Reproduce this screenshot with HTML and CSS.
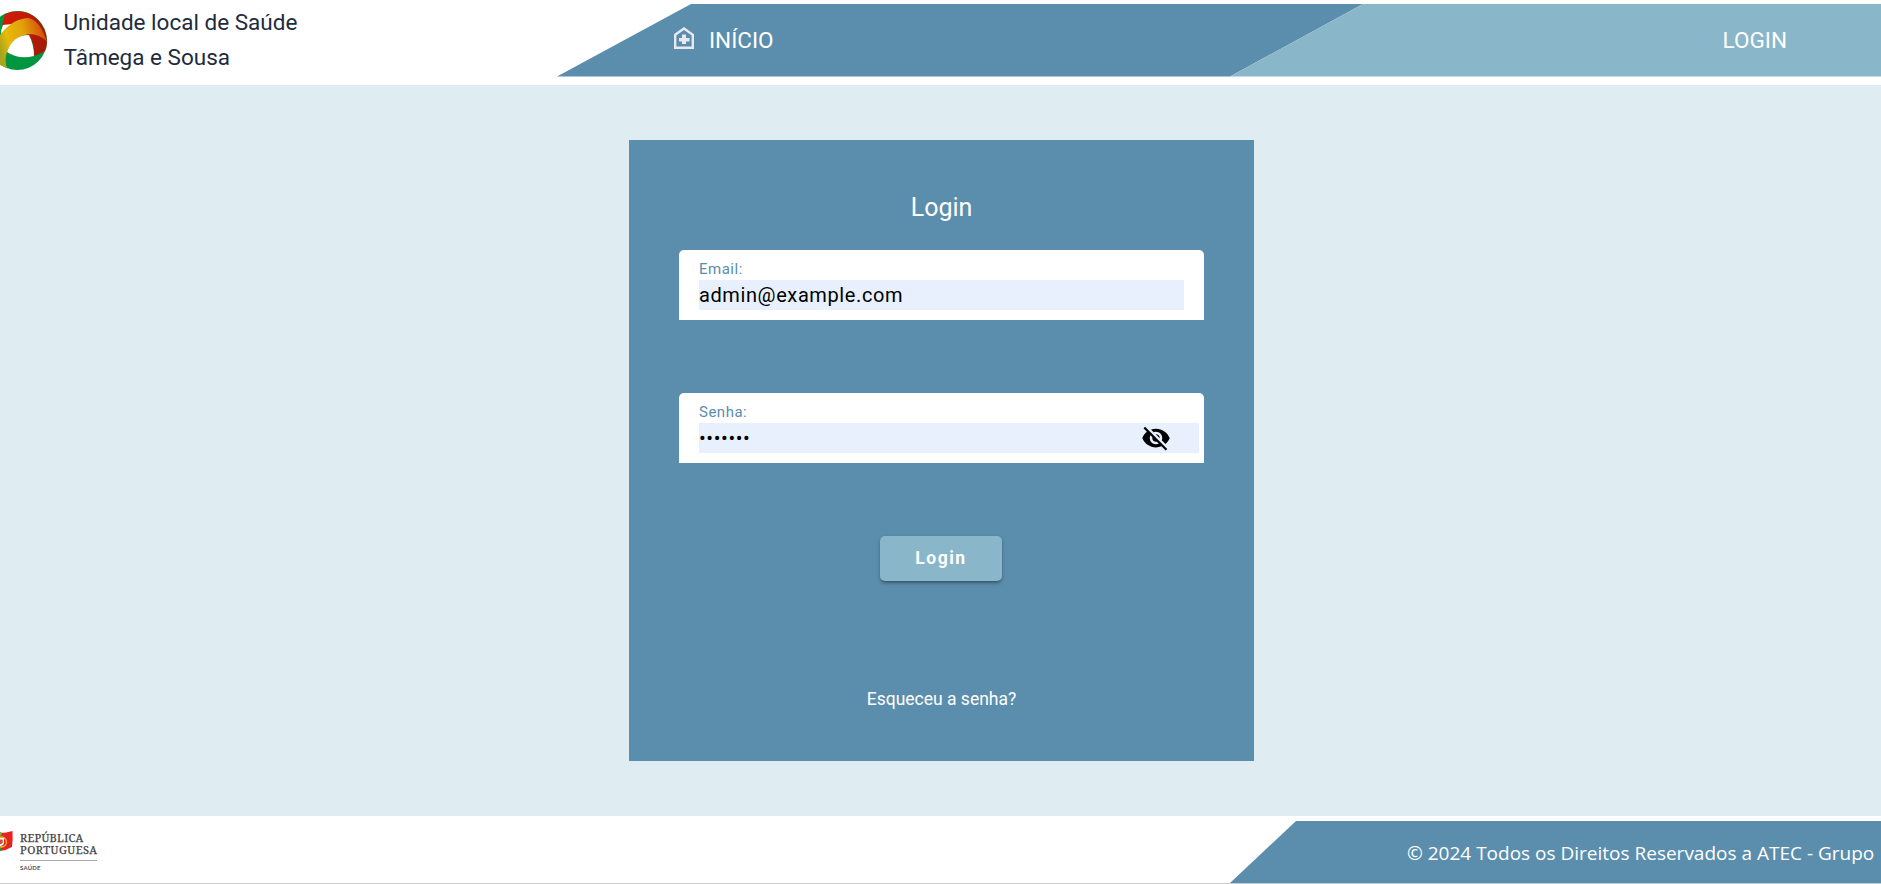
FILE: index.html
```html
<!DOCTYPE html>
<html lang="pt">
<head>
<meta charset="utf-8">
<title>Login</title>
<link rel="stylesheet" href="styles.css">
</head>
<body>
<header class="header">
  <div class="brand">
    <svg class="brand-logo" width="47" height="60" viewBox="0 0 47 60">
      <defs>
        <linearGradient id="gold" x1="0" y1="0.6" x2="1" y2="0.3"><stop offset="0" stop-color="#a9a51c"/><stop offset=".2" stop-color="#e8b90a"/><stop offset=".55" stop-color="#e2a20a"/><stop offset="1" stop-color="#d3420c"/></linearGradient>
        <linearGradient id="red" x1="0" y1="0" x2="1" y2="0.3"><stop offset="0" stop-color="#d81a05"/><stop offset="1" stop-color="#a81a08"/></linearGradient>
      </defs>
      <circle cx="17.500" cy="29.500" r="29.500" fill="#009640"/>
      <path d="M5 3Q16-2 28 2Q45 10 47 30Q47 36 45 40Q38 44 34 45Q35 32 28 24L2 14Z" fill="url(#red)"/>
      <path d="M1 24Q1 18 3 14L12 13L8 19Z" fill="#fff"/>
      <path d="M0 24Q12 8 28 7Q40 9 47 31Q40 23 29 23Q12 26 7 41Q4 49 7 57L0 54Z" fill="url(#gold)"/>
      <path d="M7 41Q13 24 29 24Q34 34 34 45Q19 49 7 41Z" fill="#fff"/>
    </svg>
    <div class="brand-name">Unidade local de Saúde<br>Tâmega e Sousa</div>
  </div>
  <nav class="nav">
    <a class="nav-home">
      <svg class="home-icon" width="20" height="23" viewBox="0 0 20 23"><path d="M1.200 7.800L10 1.500l8.800 6.300v12.900H1.200z" fill="none" stroke="#e8e8ee" stroke-width="2.400"/><path d="M8 7.500h4V11h3.500v3.500H12V17H8v-2.500H5V11h3z" fill="#e8e8ee"/></svg>
      <span>INÍCIO</span>
    </a>
    <a class="nav-login"><span>LOGIN</span></a>
  </nav>
</header>
<main class="main">
  <form class="card">
    <h1 class="title">Login</h1>
    <div class="field">
      <label class="label">Email:</label>
      <div class="input"><span>admin@example.com</span></div>
    </div>
    <div class="field field-password">
      <label class="label">Senha:</label>
      <div class="input"><span class="dots">•••••••</span>
        <svg class="eye" width="30" height="30" viewBox="0 0 24 24"><path d="M12 7c2.760 0 5 2.240 5 5 0 .65-.13 1.260-.36 1.830l2.920 2.920c1.510-1.260 2.700-2.890 3.430-4.750-1.730-4.390-6-7.500-11-7.500-1.400 0-2.740.25-3.980.7l2.160 2.160C10.740 7.130 11.350 7 12 7zM2 4.270l2.280 2.280.46.46C3.080 8.300 1.780 10.020 1 12c1.730 4.390 6 7.500 11 7.500 1.550 0 3.030-.3 4.380-.84l.42.42L19.730 22 21 20.730 3.270 3 2 4.270zM7.530 9.800l1.550 1.550c-.05.21-.08.43-.08.65 0 1.660 1.340 3 3 3 .22 0 .44-.03.65-.08l1.550 1.550c-.67.33-1.410.53-2.200.53-2.760 0-5-2.240-5-5 0-.79.2-1.530.53-2.200zm4.310-.78l3.150 3.150.02-.16c0-1.660-1.340-3-3-3l-.17.010z"/></svg>
      </div>
    </div>
    <button class="submit" type="button">Login</button>
    <a class="forgot">Esqueceu a senha?</a>
  </form>
</main>
<footer class="footer">
  <div class="gov">
    <svg class="gov-flag" width="13" height="22" viewBox="0 0 13 22"><path d="M0 2Q6 2 12.500 0Q13 9 12 16Q7 19 0 20z" fill="#e52421"/><path d="M0 1L1.500 1V4L0 5z" fill="#6dbb45"/><path d="M0 16h1.500v3.500L0 20z" fill="#22973f"/><circle cx="1.500" cy="11" r="5" fill="none" stroke="#e9b72b" stroke-width="1.300"/><path d="M0 7h4v5q-1 3-4 3z" fill="#fff"/><path d="M0 8.500h2.800v3.500L0 13.500z" fill="#d94b40"/></svg>
    <div class="gov-text">
      <div class="gov-name">REPÚBLICA</div>
      <div class="gov-name gov-country">PORTUGUESA</div>
      <div class="gov-dept">SAÚDE</div>
    </div>
  </div>
  <div class="copyright"><span>© 2024 Todos os Direitos Reservados a ATEC - Grupo</span></div>
</footer>
</body>
</html>
```
FILE: styles.css
```css
* { box-sizing: border-box; }
body { margin: 0; height: 884px; overflow: hidden; display: flex; flex-direction: column; background: #fff; font-family: Roboto, sans-serif; }
.header { height: 85px; padding-top: 4px; display: flex; }
.brand { width: 557px; display: flex; }
.brand-logo { margin-top: 7px; flex: none; }
.brand-name { margin-left: 16.5px; padding-top: 1px; font-size: 22.5px; line-height: 35px; color: #212b3c; white-space: nowrap; }
.nav { flex: 1; height: 72.5px; display: flex; color: #fff; font-size: 22.5px; }
.nav-home { width: 806px; padding: 0 0 0 117px; display: flex; align-items: center; gap: 15px; background: #5b8ead; clip-path: polygon(134px 0, 100% 0, 673px 100%, 0 100%); }
.home-icon { margin-bottom: 3px; }
.nav-login { flex: 1; margin-left: -133px; padding: 0 94px 0 0; display: flex; align-items: center; justify-content: flex-end; background: #89b6c9; clip-path: polygon(133px 0, 100% 0, 100% 100%, 0 100%); }
.main { height: 731px; padding-top: 55px; background: #dfecf1; display: flex; justify-content: center; align-items: flex-start; }
.card { width: 625px; height: 621px; margin-left: 2px; padding: 53px 50px 0; background: #5b8ead; display: flex; flex-direction: column; align-items: center; }
.title { margin: 0 0 27px; height: 30px; line-height: 30px; font-size: 25px; font-weight: 400; color: #fff; }
.field { width: 525px; height: 70px; padding: 10px 20px 0; background: #fff; border-radius: 5px 5px 0 0; }
.field-password { margin-top: 73px; padding-right: 5px; }
.label { display: block; height: 20px; line-height: 18px; font-size: 15px; letter-spacing: .5px; color: #5b8ead; }
.input { height: 30px; line-height: 30px; background: #e8f0fe; font-size: 20px; letter-spacing: .6px; color: #000; display: flex; justify-content: space-between; }
.eye { margin-right: 28px; }
.submit { margin-top: 73px; margin-right: 1px; padding: 0 0 2px; width: 122px; height: 45px; border: 0; border-radius: 5px; background: #89b6c9; color: #fff; font: 700 17.5px Roboto, sans-serif; letter-spacing: 1.5px; box-shadow: 0 3px 3px -2px rgba(0,0,0,.3), 0 2px 4px rgba(0,0,0,.25); }
.forgot { margin-top: 106px; font-size: 17.5px; line-height: 24px; color: #fff; }
.footer { height: 68px; display: flex; justify-content: space-between; padding-top: 5px; border-bottom: 1px solid #ccc; }
.gov { display: flex; padding-top: 10px; }
.gov-flag { flex: none; }
.gov-text { margin-left: 7px; padding-top: 1px; width: 77px; }
.gov-name { font: 11px/12px "Noto Serif", "DejaVu Serif", "Liberation Serif", serif; letter-spacing: .25px; color: #444; -webkit-text-stroke: .25px #444; height: 12px; }
.gov-country { height: 17px; letter-spacing: .5px; border-bottom: 1px solid #aaa; }
.gov-dept { font: 700 6px/8px Lato, sans-serif; color: #555; margin-top: 3px; letter-spacing: .2px; }
.copyright { width: 651px; padding: 2px 0 0 177px; display: flex; align-items: center; background: #5b8ead; clip-path: polygon(66px 0, 100% 0, 100% 100%, 0 100%); color: #fff; font: 19px "Open Sans", sans-serif; white-space: nowrap; }
```
